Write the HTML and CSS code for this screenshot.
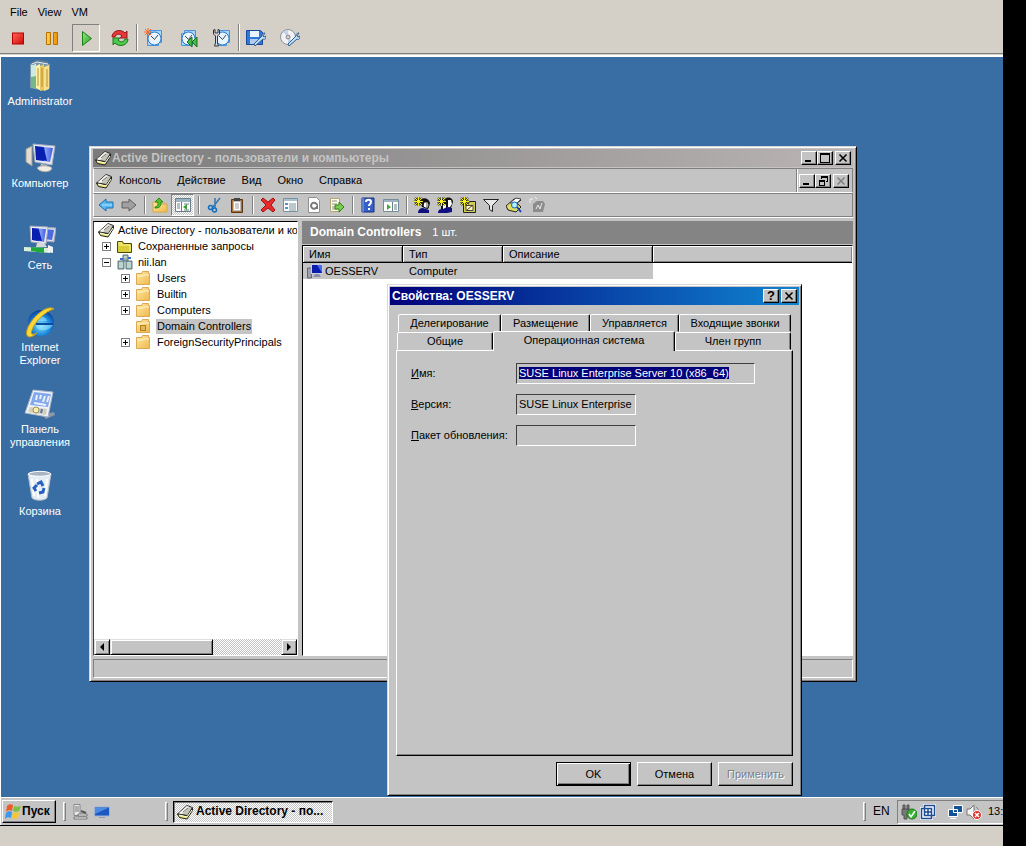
FILE: index.html
```html
<!DOCTYPE html>
<html lang="ru">
<head>
<meta charset="utf-8">
<title>Active Directory - пользователи и компьютеры</title>
<link rel="stylesheet" href="styles.css">
</head>
<body>
<svg class="sprite" aria-hidden="true">
  <defs>
    <linearGradient id="g-red" x1="0" y1="0" x2="1" y2="1"><stop offset="0" stop-color="#ff6a5a"/><stop offset="1" stop-color="#d00808"/></linearGradient>
    <linearGradient id="g-amber" x1="0" y1="0" x2="1" y2="0"><stop offset="0" stop-color="#ffd050"/><stop offset="1" stop-color="#f09000"/></linearGradient>
    <linearGradient id="g-green" x1="0" y1="0" x2="1" y2="1"><stop offset="0" stop-color="#9be87c"/><stop offset="1" stop-color="#22a022"/></linearGradient>
    <linearGradient id="g-screen" x1="0" y1="0" x2="1" y2="0"><stop offset="0" stop-color="#0a18a8"/><stop offset=".45" stop-color="#1230c8"/><stop offset=".55" stop-color="#8fa4f4"/><stop offset="1" stop-color="#3c5ce0"/></linearGradient>
    <linearGradient id="g-folder" x1="0" y1="0" x2="1" y2="1"><stop offset="0" stop-color="#ffe9a0"/><stop offset="1" stop-color="#f0b850"/></linearGradient>
    <radialGradient id="g-ie" cx=".5" cy=".6" r=".6"><stop offset="0" stop-color="#7fe4ff"/><stop offset=".6" stop-color="#1c8ade"/><stop offset="1" stop-color="#0a3c98"/></radialGradient>
  </defs>
  <symbol id="i-book" viewBox="0 0 16 16"><path d="M.5 10 10 1.500l5.500 2-5 8z" fill="#c4c4bc" stroke="#333"/><path d="m2 9 8-7 2 1-7 7z" fill="#f4f4ec"/><path d="m.5 10 2 3.500 7.500 1.500 5.500-8.500V4l-5 8z" fill="#e8e468" stroke="#222"/><path d="m2 11 8 2 5-7" fill="none" stroke="#fffde0"/><path d="m6 8 5-4" stroke="#707068"/></symbol>
  <symbol id="i-stop" viewBox="0 0 20 20"><rect x="4.500" y="5" width="11" height="11" fill="url(#g-red)" stroke="#b80000"/></symbol>
  <symbol id="i-pause" viewBox="0 0 20 20"><path d="M4.500 4.500h4v12h-4zM11.500 4.500h4v12h-4z" fill="url(#g-amber)" stroke="#b87000"/></symbol>
  <symbol id="i-play" viewBox="0 0 20 20"><path d="m6.500 3.500 9 7-9 7z" fill="url(#g-green)" stroke="#188018"/></symbol>
  <symbol id="i-reset" viewBox="0 0 20 20"><path d="M2 9c0-6 8-9 13-4l2-2v7h-7l2-2c-3-3-6-2-7 1z" fill="#e63838" stroke="#981818"/><path d="M18 11c0 6-8 9-13 4l-2 2v-7h7l-2 2c3 3 6 2 7-1z" fill="#50c850" stroke="#187818"/></symbol>
  <symbol id="i-clock" viewBox="0 0 20 20"><path d="M6.500 2.500h11v12h-11zM3.500 5.500h11v12h-11z" fill="#a8d4fa" stroke="#4a94dc"/><circle cx="10.500" cy="10.500" r="6.500" fill="#e8f4ff" stroke="#2878c8"/><path d="m7 8 3.500 3.500L14 7" fill="none" stroke="#444"/></symbol>
  <symbol id="i-snap" viewBox="0 0 20 20"><use href="#i-clock"/><path d="M4 0v8M0 4h8M1 1l6 6M7 1 1 7" stroke="#f46820"/></symbol>
  <symbol id="i-revert" viewBox="0 0 20 20"><use href="#i-clock"/><path d="m14 9-5 5 5 5zM19 9l-5 5 5 5z" fill="#48b848" stroke="#187018"/></symbol>
  <symbol id="i-manage" viewBox="0 0 20 20"><use href="#i-clock"/><path d="M1.500 2v4l2 2v7l-1 3h4l-1-3V8l2-2V2l-1.500-.5V5h-3V1.500z" fill="#d8dce4" stroke="#333"/></symbol>
  <symbol id="i-disk" viewBox="0 0 20 20"><path d="M.5 2.500h14l2 2v12H.5z" fill="#2d78d8" stroke="#18489c"/><path d="M4 3h9v6H4z" fill="#eaf4ff"/><path d="M4 11h8v5H4z" fill="#b0cdf0"/><path d="m8 16 8-8c0-2 1-3 3-3l-2 3 1 1 2-1c0 3-1 4-3 3l-8 7z" fill="#c0e0f8" stroke="#346090"/></symbol>
  <symbol id="i-cd" viewBox="0 0 20 20"><circle cx="8" cy="9" r="7.500" fill="#f2f2f6" stroke="#8c9098"/><path d="M8 9 3 4a7 7 0 0 1 5-2zM8 9l5 5a7 7 0 0 1-5 2z" fill="#c4d4e8"/><circle cx="8" cy="9" r="2" fill="#d4d0c8" stroke="#888"/><path d="m8 16 8-8c0-2 1-3 3-3l-2 3 1 1 2-1c0 3-1 4-3 3l-8 7z" fill="#c0e0f8" stroke="#346090"/></symbol>

  <symbol id="i-back" viewBox="0 0 16 16"><path d="M1 8l7-6v3h7v6H8v3z" fill="#58b8f0" stroke="#1870b8"/><path d="M4 8h10" stroke="#b0e4ff"/></symbol>
  <symbol id="i-fwd" viewBox="0 0 16 16"><path d="M15 8 8 2v3H1v6h7v3z" fill="#a0a0a0" stroke="#606060"/></symbol>
  <symbol id="i-up" viewBox="0 0 16 16"><path d="M1 5h5l1 2h8v8H1z" fill="url(#g-folder)" stroke="#d8a840"/><path d="M3 11c5 0 6-2 6-6h2L7 1 3 5h3c0 3 0 4-3 5z" fill="#58c030" stroke="#2e8818"/></symbol>
  <symbol id="i-panel" viewBox="0 0 16 16"><path d="M.5 1.500h15v13H.5z" fill="#fff" stroke="#68808c"/><path d="M1 2h14v3H1z" fill="#9db4c0"/><path d="M6.500 5v9M2 7h3M2 9h3M2 11h3M9 7h5M9 13h5" stroke="#68808c"/><path d="m8 10 4-3v6z" fill="#38a030"/></symbol>
  <symbol id="i-cut" viewBox="0 0 16 16"><path d="m14 1-7 9M9 1v10" stroke="#3878b0" stroke-width="1.500"/><circle cx="4.500" cy="10.500" r="2" fill="none" stroke="#1070c0" stroke-width="1.500"/><circle cx="8.500" cy="13" r="2" fill="none" stroke="#1070c0" stroke-width="1.500"/></symbol>
  <symbol id="i-paste" viewBox="0 0 16 16"><path d="M2.500 2.500h11v13h-11z" fill="#a87038" stroke="#5c3810"/><path d="M4.500 4.500h7v9h-7z" fill="#fff" stroke="#bbb"/><path d="M5 1h6v3H5z" fill="#444"/><path d="M6 7h4M6 9h4M6 11h4" stroke="#999"/></symbol>
  <symbol id="i-del" viewBox="0 0 16 16"><path d="m1 3 2-2 5 4 5-4 2 2-4 5 4 5-2 2-5-4-5 4-2-2 5-5z" fill="#e42c2c" stroke="#a81010"/></symbol>
  <symbol id="i-props" viewBox="0 0 16 16"><path d="M.5 1.500h14v13H.5z" fill="#fff" stroke="#7890a0"/><path d="M1 2h13v2H1z" fill="#a8c0d0"/><path d="M2 6h3v2H2zM2 10h3v2H2z" fill="#5890c8"/><path d="M6 7h7M6 9h7M6 11h7M6 13h7" stroke="#7890a0"/></symbol>
  <symbol id="i-refresh" viewBox="0 0 16 16"><path d="M2.500.5h8l3 3v12h-11z" fill="#fff" stroke="#909090"/><path d="M11 8a3 3 0 1 0-1 3" fill="none" stroke="#787878" stroke-width="2"/><path d="M12 7v5H8z" fill="#787878"/></symbol>
  <symbol id="i-export" viewBox="0 0 16 16"><path d="M1.500 1.500h9v13h-9z" fill="#fffde8" stroke="#b0a870"/><path d="M3 4h5M3 7h5M3 10h5M3 12h5" stroke="#888"/><path d="M6 8h4V5l5 5-5 5v-3H6z" fill="#78cc50" stroke="#308018"/></symbol>
  <symbol id="i-help" viewBox="0 0 16 16"><path d="M2 1h12v14H2z" fill="#3460c8" stroke="#18307c"/><path d="M3 1v14" stroke="#8cb0f0"/><path d="M6 5c0-3 5-3 5 0 0 2-2 2-2 4M9 11v2" fill="none" stroke="#fff" stroke-width="2"/></symbol>
  <symbol id="i-pane" viewBox="0 0 16 16"><path d="M.5 2.500h15v12H.5z" fill="#fff" stroke="#788c98"/><path d="M1 3h14v2H1z" fill="#9db4c0"/><path d="M9.500 5v9M11 8h3M11 10h3M11 12h3" stroke="#68808c"/><path d="m4 7 4 3-4 3z" fill="#48a838"/></symbol>
  <symbol id="i-star" viewBox="0 0 16 16"><path d="M4.500 0v9M0 4.500h9M1 1l7 7M8 1 1 8" stroke="#303000" stroke-width="2"/><path d="M4.500 0v9M0 4.500h9M1 1l7 7M8 1 1 8" stroke="#f8f020"/></symbol>
  <symbol id="i-user" viewBox="0 0 16 16"><path d="M6 4c1-4 9-4 10 2l-2 6-6-2z" fill="#111"/><path d="M10 5h4l1 3-1 3h-3l-2-2z" fill="#fff" stroke="#111"/><path d="M12 7h2M12 9h2" stroke="#555"/><path d="M4 16c0-4 3-5 5-5l3 1 3 1v3z" fill="#101080"/><use href="#i-star"/></symbol>
  <symbol id="i-group" viewBox="0 0 16 16"><path d="M8 2c3-3 8-1 8 3l-2 6-5-1zM4 5h6v7H4z" fill="#111"/><path d="M11 3h3l1 4-2 3h-2zM6 7h3v5H6z" fill="#fff"/><path d="M1 16c0-4 3-4 5-4l4-2 5 1v4l-5 1z" fill="#101080"/><use href="#i-star"/></symbol>
  <symbol id="i-ou" viewBox="0 0 16 16"><path d="M3.500 6.500h5l1-2h6v11h-12z" fill="#d4cc58" stroke="#222"/><path d="M6 8.500h7v5H6zM7 13l6-5" fill="#fffbb0" stroke="#444"/><use href="#i-star"/></symbol>
  <symbol id="i-filter" viewBox="0 0 16 16"><path d="M.5 2.500h15l-6 6v6l-3-2v-4z" fill="#e8e8e8" stroke="#222"/></symbol>
  <symbol id="i-find" viewBox="0 0 16 16"><path d="m0 9 8-7 7 1-4 3 4 4-5 5-8-2z" fill="#e0dc60" stroke="#222"/><path d="m4 6 6-5 5 1-4 4z" fill="#fff" stroke="#444"/><circle cx="8.500" cy="8" r="3" fill="#b0f0ff" stroke="#1860b0"/><path d="m11 10 4 5" stroke="#1840b0" stroke-width="2"/></symbol>
  <symbol id="i-gray" viewBox="0 0 16 16"><path d="M1 6V2h3M6 0l2 2" fill="none" stroke="#f0f0f0"/><path d="M4 15V7l4-3h6l2 3-2 8z" fill="#8c8c8c"/><path d="m7 12 2-4 2 4 2-6" fill="none" stroke="#e8e8e8"/></symbol>

  <symbol id="i-folder" viewBox="0 0 16 16"><path d="M1.500 3.500h5l1-2h6v2h1v11h-13z" fill="url(#g-folder)" stroke="#dca850"/><path d="M2 6h6l1-1h5" fill="none" stroke="#fff6d0"/></symbol>
  <symbol id="i-oufolder" viewBox="0 0 16 16"><use href="#i-folder"/><path d="M5 7h6v6H5z" fill="#b88010"/><path d="M6 9h4M6 11h4" stroke="#fff0b0"/></symbol>
  <symbol id="i-query" viewBox="0 0 16 16"><path d="M.5 3.500h5l1 2h8v9H.5z" fill="#d8cc38" stroke="#4c4808"/><path d="M1 5h4M2 7h11v6" fill="none" stroke="#fff8a0"/></symbol>
  <symbol id="i-domain" viewBox="0 0 16 16"><path d="M6 1h5v6H6zM1 7h6v8H1zM9 7h6v8H9z" fill="#90b0a8" stroke="#607880"/><path d="M7 3h3M2 9h4M2 11h4M2 13h4M10 9h4M10 11h4M10 13h4" stroke="#e8f8f0"/><path d="M3 5h3M11 4h3" stroke="#3868c8" stroke-width="2"/></symbol>
  <symbol id="i-pc" viewBox="0 0 16 16"><path d="M.5 5h4v10h-4z" fill="#a0a0b0" stroke="#667"/><path d="M4 1h12v10H4z" fill="#c8ccdc"/><path d="M5 2h10v8H5z" fill="#0a1cae"/><path d="M10 2h5v8z" fill="#4868e4"/><path d="M8 11h4l2 3H6z" fill="#8890a8"/></symbol>

  <symbol id="d-docs" viewBox="0 0 32 32"><path d="m6 4 6-3 14 3v24l-6 3-14-3z" fill="#7c98a8"/><path d="m7 5 5-2v25l-5-1z" fill="#cfe8e0"/><path d="m7 17 5-1v13l-5-2z" fill="#78b888"/><path d="m12 6 4-2v26l-4-2z" fill="#fff2b0"/><path d="m16 6 4-2v26l-4 1z" fill="#e8c860"/><path d="m20 7 5-2v24l-5 2z" fill="#f8e08c"/><path d="M14 8v18M18 8v19M23 9v18" stroke="#b8902c"/><path d="m8 4 5-3 11 2" fill="none" stroke="#607c94" stroke-width="3"/><path d="m8 4 5-2 11 2" fill="none" stroke="#e8f0f8"/></symbol>
  <symbol id="d-pc" viewBox="0 0 32 32"><path d="m2 7 6-3v20l-6-4z" fill="#e4dccf" stroke="#98948c"/><path d="m9 2 22 2-3 19-17-3z" fill="#e4e8f2" stroke="#a8acbc"/><path d="m11 4 18 2-3 14-14-2z" fill="url(#g-screen)"/><path d="m12 5 8 1 3 13-10-2z" fill="#0820b0"/><path d="m17 22 6 1v3l-7-1z" fill="#c8c4bc"/><path d="M13 26c3-3 12-3 15 0-1 5-12 5-15 0z" fill="#f0ece4" stroke="#aaa49c"/></symbol>
  <symbol id="d-net" viewBox="0 0 32 32"><path d="m18 3 14 1-2 14-10-1z" fill="#d8dce8" stroke="#a0a4b4"/><path d="m21 5 9 1-2 10-8-1z" fill="#4c6ae0"/><path d="m6 2 18 1-2 17-15-2z" fill="#e8ecf4" stroke="#a0a4b4"/><path d="m8 4 14 1-2 13-12-2z" fill="url(#g-screen)"/><path d="m9 5 6 1 3 11-9-1z" fill="#0820b0"/><path d="M13 19h7l3 4H12z" fill="#d8d8d8"/><path d="m0 23 26 1v5L0 27z" fill="#d8f0d8"/><path d="m7 23 13 1v5L7 27z" fill="#20a838"/><path d="m24 21 5 2v6l-5-1z" fill="#f0f0f0"/></symbol>
  <symbol id="d-ie" viewBox="0 0 32 32"><circle cx="17" cy="17" r="13" fill="url(#g-ie)"/><path d="M11 15c1-6 11-6 12 0zM11 19h18c-3 5-14 9-18 0z" fill="#a8ecff" opacity=".5"/><path d="M12 18h17" stroke="#0c4ca0" stroke-width="2"/><path d="M30 3c-5-4-16 3-23 13C2 23 1 30 5 31c3 0 6-2 8-4-4 2-7 2-5-3C11 15 22 5 30 3z" fill="#f8d838" stroke="#c89818"/></symbol>
  <symbol id="d-cpl" viewBox="0 0 32 32"><path d="m18 27 12-3 1 3-9 4z" fill="#8c98a8"/><path d="m9 2 20 2-5 25L1 25z" fill="#f0f2fa" stroke="#a8b0c4"/><path d="m10 4 17 2-3 13-18-2z" fill="#84a8ec"/><path d="m13 7-1 5M17 7l-1 4M21 8l-2 6M25 8l-2 6M10 15l12 2" stroke="#e8f0ff" stroke-width="2"/><path d="m6 19 17 2-1 6-18-3z" fill="#d4d0b8"/><circle cx="12" cy="22" r="3" fill="#f8ecb0" stroke="#989060"/><path d="m18 21-1 4" stroke="#5878b8" stroke-width="2"/></symbol>
  <symbol id="d-bin" viewBox="0 0 32 32"><path d="M4 4h23l-4 24c-3 3-12 3-15 0z" fill="#e4ecf4" stroke="#b0bcc8"/><path d="M4 4c2-3 20-4 23 0-3 3-20 3-23 0z" fill="#a8b4c4" stroke="#fff"/><path d="m8 9 2 17M13 9l1 19M23 9l-2 17" stroke="#fff" stroke-width="2"/><path d="m13 14 4-2 2 4M20 18l-1 4-4 1M12 21l-2-3 3-3" fill="none" stroke="#2860c0" stroke-width="3"/></symbol>

  <symbol id="i-win" viewBox="0 0 16 16"><path d="M2 2c2-2 4-2 6-1L7 7C5 6 3 6 1 8z" fill="#f05a28"/><path d="M9 2c2 1 4 1 7 0l-2 5c-2 1-4 1-6 0z" fill="#7cc040"/><path d="M1 9c2-2 4-2 6-1l-1 6c-2-1-4-1-6 1z" fill="#3c98e8"/><path d="M8 8c2 1 4 1 6 0l-1 6c-2 1-4 1-6 0z" fill="#f8c828"/></symbol>
  <symbol id="i-server" viewBox="0 0 16 16"><path d="M2 .5h6v11H2z" fill="#e8e8e8" stroke="#888"/><path d="M3 3h4M3 5h4M3 7h4" stroke="#777"/><path d="M6 10h9v2H6zM2 13h13v2H2z" fill="#f4f4f4" stroke="#777"/><path d="m9 7 5 2" stroke="#555" stroke-width="2"/></symbol>
  <symbol id="i-desk" viewBox="0 0 16 16"><path d="M.5 3h15v9H.5z" fill="#1c58c0" stroke="#9cb4d8"/><path d="M1 4h13L1 10z" fill="#4c8ce4"/><path d="M5 13h6v1H5z" fill="#99a"/></symbol>
  <symbol id="i-usb" viewBox="0 0 16 16"><path d="M1 5h7v6H6v4H3v-4H1zM2 1h2v4H2zM6 1h2v4H6z" fill="#777" stroke="#555"/><circle cx="11" cy="10" r="5" fill="#38b030" stroke="#187818"/><path d="m8 10 2 3 4-6" fill="none" stroke="#fff" stroke-width="1.500"/></symbol>
  <symbol id="i-vm" viewBox="0 0 16 16"><path d="M4.500 1.500h10v10h-10zM1.500 4.500h10v10h-10z" fill="#fff" stroke="#fff" stroke-width="3"/><path d="M4.500 1.500h10v10h-10zM1.500 4.500h10v10h-10zM4.500 8h7M8 4.500v7" fill="none" stroke="#1c4c94" stroke-width="1.500"/></symbol>
  <symbol id="i-lan" viewBox="0 0 16 16"><path d="M6.500 1.500h9v7h-9zM1.500 5.500h9v7h-9z" fill="#145298" stroke="#fff"/><path d="M3 14h6v1H3z" fill="#fff"/></symbol>
  <symbol id="i-mute" viewBox="0 0 16 16"><path d="M1 5h3l4-4v14l-4-4H1z" fill="#f4f4f4" stroke="#777"/><path d="M10 3c2 1 3 3 2 5" fill="none" stroke="#888"/><circle cx="11" cy="11" r="4.500" fill="#e03028" stroke="#fff"/><path d="m9 9 4 4M13 9l-4 4" stroke="#fff" stroke-width="1.500"/></symbol>

  <symbol id="c-min" viewBox="0 0 12 10"><path d="M2 7h6v2H2z"/></symbol>
  <symbol id="c-max" viewBox="0 0 12 10"><path d="M1 0h10v10H1zM2 2v7h8V2z" fill-rule="evenodd"/></symbol>
  <symbol id="c-rest" viewBox="0 0 12 10"><path d="M4 0h7v6H9V5h1V2H5v1H4zM2 4h6v6H2zM3 6v3h4V6z" fill-rule="evenodd"/></symbol>
  <symbol id="c-close" viewBox="0 0 12 10"><path d="m2.500 1.500 7 7M9.500 1.500l-7 7" stroke="currentColor" stroke-width="1.500"/></symbol>
</svg>

<div class="console">
  <nav class="vm-menu"><button>File</button><button>View</button><button>VM</button></nav>
  <div class="vm-tools">
    <button aria-label="Power off"><svg><use href="#i-stop"/></svg></button>
    <button aria-label="Suspend"><svg><use href="#i-pause"/></svg></button>
    <button class="pressed" aria-label="Power on"><svg><use href="#i-play"/></svg></button>
    <button aria-label="Reset"><svg><use href="#i-reset"/></svg></button>
    <i class="vm-sep"></i>
    <button aria-label="Take snapshot"><svg><use href="#i-snap"/></svg></button>
    <button aria-label="Revert snapshot"><svg><use href="#i-revert"/></svg></button>
    <button aria-label="Manage snapshots"><svg><use href="#i-manage"/></svg></button>
    <i class="vm-sep"></i>
    <button aria-label="Floppy settings"><svg><use href="#i-disk"/></svg></button>
    <button aria-label="CD settings"><svg><use href="#i-cd"/></svg></button>
  </div>

  <div class="guest">
    <main class="desktop">
      <div class="shortcuts">
        <a href="#admin"><svg><use href="#d-docs"/></svg><span>Administrator</span></a>
        <a href="#computer"><svg><use href="#d-pc"/></svg><span>Компьютер</span></a>
        <a href="#network"><svg><use href="#d-net"/></svg><span>Сеть</span></a>
        <a href="#ie"><svg><use href="#d-ie"/></svg><span>Internet<br>Explorer</span></a>
        <a href="#panel"><svg><use href="#d-cpl"/></svg><span>Панель<br>управления</span></a>
        <a href="#bin"><svg><use href="#d-bin"/></svg><span>Корзина</span></a>
      </div>

      <section class="window mmc">
        <header class="title inactive">
          <svg class="ico"><use href="#i-book"/></svg><h1>Active Directory - пользователи и компьютеры</h1>
          <button class="cap" aria-label="Свернуть"><svg><use href="#c-min"/></svg></button>
          <button class="cap" aria-label="Развернуть"><svg><use href="#c-max"/></svg></button>
          <button class="cap last" aria-label="Закрыть"><svg><use href="#c-close"/></svg></button>
        </header>
        <nav class="menu">
          <svg class="ico"><use href="#i-book"/></svg>
          <button>Консоль</button><button>Действие</button><button>Вид</button><button>Окно</button><button>Справка</button>
          <div class="mdi">
            <button class="cap" aria-label="Свернуть окно"><svg><use href="#c-min"/></svg></button>
            <button class="cap" aria-label="Восстановить окно"><svg><use href="#c-rest"/></svg></button>
            <button class="cap last" disabled aria-label="Закрыть окно"><svg><use href="#c-close"/></svg></button>
          </div>
        </nav>
        <div class="tools">
          <button aria-label="Назад"><svg><use href="#i-back"/></svg></button>
          <button aria-label="Вперед"><svg><use href="#i-fwd"/></svg></button>
          <i></i>
          <button aria-label="Вверх"><svg><use href="#i-up"/></svg></button>
          <button class="pressed" aria-label="Дерево консоли"><svg><use href="#i-panel"/></svg></button>
          <i></i>
          <button aria-label="Вырезать"><svg><use href="#i-cut"/></svg></button>
          <button aria-label="Вставить"><svg><use href="#i-paste"/></svg></button>
          <i></i>
          <button aria-label="Удалить"><svg><use href="#i-del"/></svg></button>
          <button aria-label="Свойства"><svg><use href="#i-props"/></svg></button>
          <button aria-label="Обновить"><svg><use href="#i-refresh"/></svg></button>
          <button aria-label="Экспорт списка"><svg><use href="#i-export"/></svg></button>
          <i></i>
          <button aria-label="Справка"><svg><use href="#i-help"/></svg></button>
          <button aria-label="Панель действий"><svg><use href="#i-pane"/></svg></button>
          <i></i>
          <button aria-label="Новый пользователь"><svg><use href="#i-user"/></svg></button>
          <button aria-label="Новая группа"><svg><use href="#i-group"/></svg></button>
          <button aria-label="Новое подразделение"><svg><use href="#i-ou"/></svg></button>
          <button aria-label="Фильтр"><svg><use href="#i-filter"/></svg></button>
          <button aria-label="Найти"><svg><use href="#i-find"/></svg></button>
          <button disabled aria-label="Добавить в группу"><svg><use href="#i-gray"/></svg></button>
        </div>
        <div class="panes">
          <div class="tree-pane">
            <ul class="tree">
              <li class="root"><svg class="ico"><use href="#i-book"/></svg><span>Active Directory - пользователи и компьютеры</span></li>
              <li><button class="exp" aria-label="Развернуть"></button><svg class="ico"><use href="#i-query"/></svg><span>Сохраненные запросы</span></li>
              <li><button class="exp open" aria-label="Свернуть"></button><svg class="ico"><use href="#i-domain"/></svg><span>nii.lan</span></li>
              <li class="sub"><button class="exp" aria-label="Развернуть"></button><svg class="ico"><use href="#i-folder"/></svg><span>Users</span></li>
              <li class="sub"><button class="exp" aria-label="Развернуть"></button><svg class="ico"><use href="#i-folder"/></svg><span>Builtin</span></li>
              <li class="sub"><button class="exp" aria-label="Развернуть"></button><svg class="ico"><use href="#i-folder"/></svg><span>Computers</span></li>
              <li class="sub leaf"><svg class="ico"><use href="#i-oufolder"/></svg><span class="sel">Domain Controllers</span></li>
              <li class="sub"><button class="exp" aria-label="Развернуть"></button><svg class="ico"><use href="#i-folder"/></svg><span>ForeignSecurityPrincipals</span></li>
            </ul>
            <div class="hscroll">
              <button aria-label="Влево"><svg viewBox="0 0 8 8"><path d="M6 0v8L2 4z"/></svg></button>
              <div class="track"><div class="thumb"></div></div>
              <button aria-label="Вправо"><svg viewBox="0 0 8 8"><path d="M2 0v8l4-4z"/></svg></button>
            </div>
          </div>
          <div class="list-pane">
            <div class="banner"><b>Domain Controllers</b><span>1 шт.</span></div>
            <div class="list">
              <table>
                <colgroup><col class="c1"><col class="c1"><col class="c2"><col></colgroup>
                <thead><tr><th>Имя</th><th>Тип</th><th>Описание</th><th></th></tr></thead>
                <tbody><tr><td class="name"><svg class="ico"><use href="#i-pc"/></svg>OESSERV</td><td>Computer</td><td></td><td class="rest"></td></tr></tbody>
              </table>
            </div>
          </div>
        </div>
        <div class="status"></div>
      </section>

      <section class="window dialog">
        <header class="title">
          <h2>Свойства: OESSERV</h2>
          <button class="cap q" aria-label="Справка">?</button>
          <button class="cap last" aria-label="Закрыть"><svg><use href="#c-close"/></svg></button>
        </header>
        <div class="sheet">
          <div class="tabs back"><button class="t1">Делегирование</button><button class="t2">Размещение</button><button class="t2">Управляется</button><button class="t3">Входящие звонки</button></div>
          <div class="tabs front"><button class="u1">Общие</button><button class="active">Операционная система</button><button class="t3">Член групп</button></div>
          <form class="page">
            <label for="f-name"><u>И</u>мя:</label><input id="f-name" class="wide" readonly value="SUSE Linux Enterprise Server 10 (x86_64)">
            <label for="f-ver"><u>В</u>ерсия:</label><input id="f-ver" readonly value="SUSE Linux Enterprise Server 10 (x86_64)">
            <label for="f-sp"><u>П</u>акет обновления:</label><input id="f-sp" readonly value="">
          </form>
          <div class="actions"><button class="default">OK</button><button>Отмена</button><button disabled>Применить</button></div>
        </div>
      </section>
    </main>

    <footer class="taskbar">
      <button class="start"><svg class="ico"><use href="#i-win"/></svg>Пуск</button>
      <i class="grip"></i>
      <div class="quick">
        <button aria-label="Диспетчер сервера"><svg class="ico"><use href="#i-server"/></svg></button>
        <button aria-label="Свернуть все окна"><svg class="ico"><use href="#i-desk"/></svg></button>
      </div>
      <i class="grip"></i>
      <button class="task"><svg class="ico"><use href="#i-book"/></svg>Active Directory - по...</button>
      <i class="grip push"></i>
      <span class="lang">EN</span>
      <div class="tray">
        <svg class="ico"><use href="#i-usb"/></svg><svg class="ico"><use href="#i-vm"/></svg>
        <svg class="ico gap"><use href="#i-lan"/></svg><svg class="ico"><use href="#i-mute"/></svg><time>13:</time>
      </div>
    </footer>
  </div>
</div>
<script src="main.js"></script>
</body>
</html>
```
FILE: styles.css
```css
* { box-sizing: border-box; }
html, body { height: 100%; }
body {
  margin: 0;
  padding-right: 23px;
  background: #000;
  color: #000;
  font: 11px/13px "Liberation Sans", Arial, sans-serif;
  overflow: hidden;
}
button, input { font: inherit; color: inherit; border: 0; border-radius: 0; padding: 0; margin: 0; background: none; outline: 0; }
h1, h2, ul { margin: 0; padding: 0; font: inherit; list-style: none; }
svg { display: block; flex: none; }
.sprite { position: absolute; width: 0; height: 0; }
.ico { width: 16px; height: 16px; }

.console { height: 100%; display: flex; flex-direction: column; background: #d4d0c8; padding-bottom: 20px; overflow: hidden; }
.vm-menu { display: flex; gap: 10px; height: 24px; padding-left: 10px; align-items: center; }
.vm-tools { display: flex; gap: 6px; height: 30px; padding: 0 4px 2px; border-bottom: 1px solid #808080; }
.vm-tools button { width: 28px; height: 28px; display: grid; place-items: center; }
.vm-tools svg { width: 20px; height: 20px; }
.vm-tools .pressed { border: 1px solid; border-color: #808080 #fff #fff #808080; }
.vm-sep { width: 2px; margin: 0 -4px; border-left: 1px solid #808080; border-right: 1px solid #fff; }

.guest { flex: 1; min-height: 0; display: flex; flex-direction: column; margin-top: 1px; padding-left: 1px; background: #fff; border-bottom: 1px solid #000; }
.desktop { position: relative; flex: 1; min-height: 0; margin-top: 2px; background: #396ea5; }
.shortcuts { display: flex; flex-direction: column; width: 78px; padding-top: 3px; }
.shortcuts a { display: flex; flex-direction: column; align-items: center; gap: 3px; height: 82px; color: #fff; text-align: center; text-decoration: none; }
.shortcuts svg { width: 32px; height: 32px; }

.window { position: absolute; display: flex; flex-direction: column; background: #c4c4c4; border: 1px solid; border-color: #d8d8d8 #000 #000 #d8d8d8; box-shadow: inset 1px 1px #fff, inset -1px -1px #808080; padding: 2px 3px 3px; }
.title { display: flex; align-items: center; height: 18px; padding: 0 2px; color: #fff; background: linear-gradient(90deg, #00007b, #1084d0); font-weight: bold; font-size: 12px; }
.title.inactive { color: #c4c4c4; background: linear-gradient(90deg, #7b7b7b, #bab4b4); }
.title h1, .title h2 { flex: 1; padding-left: 1px; white-space: nowrap; overflow: hidden; }
.cap { width: 16px; height: 14px; display: grid; place-items: center; flex: none; background: #c4c4c4; color: #000; border: 1px solid; border-color: #fff #000 #000 #fff; box-shadow: inset -1px -1px #808080; }
.cap svg { width: 12px; height: 10px; fill: currentColor; }
.cap:disabled { color: #808080; }
.cap.last { margin-left: 2px; }
.cap.q { font-size: 13px; font-weight: bold; line-height: 12px; }

.mmc { left: 88px; top: 89px; width: 768px; height: 536px; }
.menu { display: flex; align-items: center; height: 25px; margin-top: 1px; padding-left: 2px; border: 1px solid; border-color: #808080 #808080 #fff #fff; }
.menu > button { padding: 0 8px; }
.menu .ico + button { padding-left: 7px; }
.mdi { align-self: stretch; display: flex; align-items: center; margin-left: auto; padding: 0 3px 0 2px; border-left: 1px solid #808080; box-shadow: inset 1px 0 #fff; }
.tools { display: flex; align-items: center; height: 24px; border: 1px solid; border-color: #808080 #808080 #808080 #fff; }
.tools button { width: 23px; height: 22px; display: grid; place-items: center; }
.tools svg { width: 16px; height: 16px; }
.tools i { width: 8px; height: 18px; border-left: 1px solid #808080; box-shadow: inset 1px 0 #fff; margin-left: 4px; margin-right: -4px; }
.tools .pressed { border: 1px solid; border-color: #808080 #fff #fff #808080; background: repeating-conic-gradient(#fff 0 25%, #c4c4c4 0 50%) 0 0 / 2px 2px; }

.panes { flex: 1; min-height: 0; display: flex; gap: 4px; padding-top: 3px; border-top: 1px solid #fff; }
.tree-pane { width: 205px; display: flex; flex-direction: column; background: #fff; border: 1px solid; border-color: #000 #fff #fff #404040; }
.tree { flex: 1; overflow: hidden; }
.tree li { display: flex; align-items: center; height: 16px; padding-left: 8px; white-space: nowrap; }
.tree .root { padding-left: 4px; }
.tree .sub { padding-left: 27px; }
.tree .leaf { padding-left: 41px; }
.tree span { min-width: 0; margin-left: 4px; padding: 1px; overflow: hidden; }
.tree .root span { margin-left: 3px; }
.tree .sub span { margin-left: 5px; }
.tree .sel { background: #c4c4c4; }
.exp { width: 9px; height: 9px; flex: none; margin-right: 6px; border: 1px solid #808080; background: linear-gradient(#000, #000) 1px 3px / 5px 1px no-repeat, linear-gradient(#000, #000) 3px 1px / 1px 5px no-repeat, #fff; }
.sub .exp { margin-right: 5px; }
.exp.open { background: linear-gradient(#000, #000) 1px 3px / 5px 1px no-repeat, #fff; }
.hscroll { display: flex; height: 16px; }
.hscroll button, .thumb { background: #c4c4c4; border: 1px solid; border-color: #e0e0e0 #000 #000 #e0e0e0; box-shadow: inset 1px 1px #fff, inset -1px -1px #808080; }
.hscroll button { width: 16px; display: grid; place-items: center; }
.hscroll svg { width: 8px; height: 8px; }
.track { flex: 1; background: repeating-conic-gradient(#fff 0 25%, #c4c4c4 0 50%) 0 0 / 2px 2px; }
.thumb { width: 60%; height: 100%; }
.list-pane { flex: 1; min-width: 0; display: flex; flex-direction: column; }
.banner { display: flex; align-items: center; gap: 11px; height: 23px; padding-left: 8px; background: #848484; color: #fff; }
.banner b { font-size: 12px; }
.list { flex: 1; margin-top: 1px; background: #fff; border: 1px solid; border-color: #000 #fff #fff #000; }
table { width: 100%; table-layout: fixed; border-collapse: separate; border-spacing: 0; }
.c1 { width: 100px; }
.c2 { width: 150px; }
th { height: 17px; padding: 0 6px; text-align: left; font-weight: normal; background: #c4c4c4; border-right: 1px solid #000; border-bottom: 1px solid #000; box-shadow: inset 1px 1px #fff, inset -1px -1px #808080; }
th:last-child { border-right: 0; }
td { height: 16px; padding: 0 6px; background: #c4c4c4; }
td.name { display: flex; align-items: center; padding: 0 4px; gap: 2px; }
td.rest { background: #fff; }
.status { height: 19px; margin-top: 3px; border: 1px solid; border-color: #808080 #fff #fff #808080; }

.dialog { left: 386px; top: 227px; width: 415px; height: 512px; padding: 2px; }
.dialog .title { padding-left: 1px; }
.sheet { flex: 1; display: flex; flex-direction: column; padding: 9px 6px 7px; }
.tabs { display: flex; height: 18px; padding: 0 2px 0 1px; }
.tabs button { background: #c4c4c4; border: 1px solid; border-color: #fff #000 transparent #fff; box-shadow: inset -1px 0 #808080; border-radius: 2px 2px 0 0; }
.back { padding-left: 2px; }
.t1 { width: 103px; }
.t2 { width: 89px; }
.t3 { flex: 1; }
.u1 { width: 96px; }
.front { position: relative; }
.front .active { width: 182px; height: 20px; margin-top: -1px; margin-bottom: -1px; border-bottom: 0; padding-bottom: 2px; z-index: 1; }
.page { flex: 1; display: grid; grid-template-columns: 105px 1fr; grid-auto-rows: 21px; row-gap: 10px; align-items: center; padding: 12px 14px; border: 1px solid; border-color: #fff #000 #000 #fff; box-shadow: inset -1px -1px #808080; }
.page input { width: 120px; height: 21px; padding: 0 2px 2px; border: 1px solid; border-color: #404040 #fff #fff #404040; background: #c4c4c4; caret-color: transparent; }
.page .wide { width: 239px; }
.page ::selection { background: #00007b; color: #fff; }
.actions { display: flex; justify-content: flex-end; gap: 6px; padding-top: 6px; }
.actions button { width: 75px; height: 24px; border: 1px solid; border-color: #fff #000 #000 #fff; box-shadow: inset -1px -1px #808080; }
.actions .default { border-color: #000; box-shadow: inset 1px 1px #fff, inset -1px -1px #000, inset -2px -2px #808080; }
.actions :disabled { color: #808080; text-shadow: 1px 1px #fff; }

.taskbar { display: flex; align-items: center; height: 28px; padding: 1px 0 1px 1px; background: #c4c4c4; border-top: 1px solid #fff; overflow: hidden; }
.start { display: flex; align-items: center; gap: 1px; width: 54px; height: 23px; padding-left: 2px; font-weight: bold; font-size: 12px; border: 1px solid; border-color: #fff #000 #000 #fff; box-shadow: inset -1px -1px #808080; }
.grip { width: 3px; height: 19px; margin: 0 6px 0 7px; border: 1px solid; border-color: #fff #808080 #808080 #fff; }
.quick { display: flex; gap: 6px; width: 86px; }
.quick + .grip { margin-right: 5px; }
.task { display: flex; align-items: center; gap: 3px; width: 160px; height: 22px; padding-left: 3px; font-weight: bold; font-size: 12px; white-space: nowrap; border: 1px solid; border-color: #000 #fff #fff #000; box-shadow: inset 1px 1px #808080; background: repeating-conic-gradient(#fff 0 25%, #c4c4c4 0 50%) 0 0 / 2px 2px; }
.grip.push { margin-left: auto; margin-right: 7px; }
.lang { width: 24px; font-size: 12px; }
.tray { display: flex; align-items: center; gap: 3px; width: 106px; height: 24px; padding-left: 3px; white-space: nowrap; border: 1px solid; border-color: #808080 transparent #fff #808080; border-right: 0; }
.tray .gap { margin-left: 8px; }
time { margin-left: 3px; }
```
FILE: main.js
```js
const nameField = document.getElementById('f-name');
nameField.focus();
nameField.select();
```
